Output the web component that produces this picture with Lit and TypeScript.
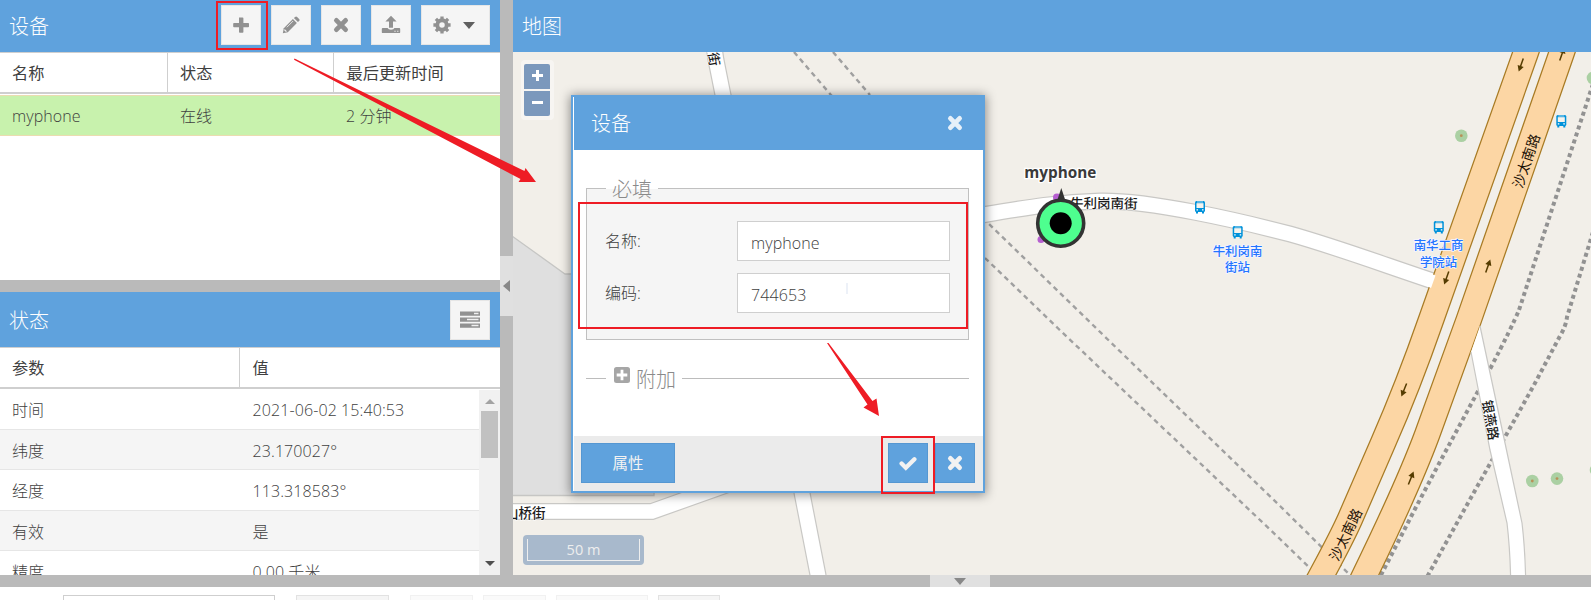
import { LitElement, html, css, svg } from "lit";
import { customElement } from "lit/decorators.js";

const glyph = (name: string) => {
  switch (name) {
    case "plus":
      return svg`<svg width="18" height="18" viewBox="0 0 18 18"><path d="M7 1.500h3.600a.8.8 0 0 1 .8.8V7h4.800a.8.8 0 0 1 .8.8v2.600a.8.8 0 0 1-.8.8h-4.800v4.700a.8.8 0 0 1-.8.8H7.800a.8.8 0 0 1-.8-.8v-4.700H2a.8.8 0 0 1-.8-.8V7.800A.8.8 0 0 1 2 7h5z" fill="currentColor"/></svg>`;
    case "pencil":
      return svg`<svg width="18" height="18" viewBox="0 0 18 18"><path d="M.8 17.200l1-5L10.900 3.100l4 4L5.800 16.200z" fill="currentColor"/><path d="M11.900 2.100l1.200-1.200a1.400 1.400 0 0 1 2 0l2 2a1.400 1.400 0 0 1 0 2l-1.200 1.200z" fill="currentColor"/><path d="M4.800 11.300l6.300-6.300" stroke="#f5f5f5" stroke-width=".8"/><path d="M2.400 13.600l2 2" stroke="#f5f5f5" stroke-width="1.300"/></svg>`;
    case "times":
      return svg`<svg width="16" height="16" viewBox="0 0 16 16"><path d="M3.400 3.400l9.200 9.200M12.600 3.400l-9.200 9.200" stroke="currentColor" stroke-width="4.800" stroke-linecap="round"/></svg>`;
    case "upload":
      return svg`<svg width="20" height="19" viewBox="0 0 20 19"><path d="M10 .7l5.600 5.900H12v6.200H8V6.600H4.400z" fill="currentColor"/><path d="M1.700 13.100h4.900a3.500 2.300 0 0 0 6.800 0h4.900a.9.9 0 0 1 .9.9v3.200a.9.9 0 0 1-.9.9H1.700a.9.9 0 0 1-.9-.9V14a.9.9 0 0 1 .9-.9z" fill="currentColor"/><path d="M13.400 16.300h1.200M16.200 16.300h1.200" stroke="#f5f5f5" stroke-width="1.100"/></svg>`;
    case "gear":
      return svg`<svg width="18" height="18" viewBox="0 0 18 18"><circle cx="9" cy="9" r="4.700" fill="none" stroke="currentColor" stroke-width="3.900"/><path d="M9 .4v3M9 14.600v3M.4 9h3M14.600 9h3M2.900 2.900l2 2M13.100 13.100l2 2M15.100 2.900l-2 2M4.900 13.100l-2 2" stroke="currentColor" stroke-width="3.300"/></svg>`;
    case "server":
      return svg`<svg width="20" height="17" viewBox="0 0 20 17"><path d="M0 .5h20v4.200H0zM0 6.500h20v4.200H0zM0 12.500h20v4.200H0z" fill="currentColor"/><path d="M14 2.600h4.500M7 8.600h11.500M11.500 14.600h7" stroke="#f0f0f0" stroke-width="1.500"/></svg>`;
    case "check":
      return svg`<svg width="18" height="15" viewBox="0 0 18 15"><path d="M2.600 7.600l4.200 4.200L15.400 3.200" fill="none" stroke="currentColor" stroke-width="4.300" stroke-linecap="round"/></svg>`;
    default:
      return svg`<svg width="16" height="16" viewBox="0 0 16 16"><path d="M2.500 0h11A2.500 2.500 0 0 1 16 2.500v11a2.500 2.500 0 0 1-2.500 2.500h-11A2.500 2.500 0 0 1 0 13.500v-11A2.500 2.500 0 0 1 2.500 0z" fill="currentColor"/><path d="M8 2.700v10.600M2.700 8h10.600" stroke="#fff" stroke-width="2.800"/></svg>`;
  }
};

@customElement("street-map")
class StreetMap extends LitElement {
  static styles = css`
    :host { display: block; overflow: hidden; background: #f2efe9; }
    svg { display: block; }
    text { font-family: "Noto Sans CJK SC", sans-serif; }
    .road { font-size: 13.500px; fill: #1c1c1c; font-weight: 500; stroke: #fff; stroke-width: 1.200px; paint-order: stroke; }
    .major { font-size: 14px; fill: #1c1206; font-weight: 400; }
    .stop { font-size: 12.400px; fill: #2474ff; font-weight: 500; stroke: #f4f6ff; stroke-width: 1.400px; paint-order: stroke; text-anchor: middle; }
    .pin { font: 700 15.300px "Open Sans", sans-serif; fill: #3a3a3a; stroke: #fff; stroke-width: 2.500px; paint-order: stroke; text-anchor: middle; }
    .edge { fill: none; stroke: #c9c8c5; stroke-width: 17; }
    .lane { fill: none; stroke: #fff; stroke-width: 14.600; }
    .kerb { fill: none; stroke: #a87b24; stroke-width: 26.500; }
    .deck { fill: none; stroke: #fcd6a4; stroke-width: 24; }
    .dash { fill: none; stroke: #a0a0a0; stroke-width: 2.400; stroke-dasharray: 5 4; }
    .dots { fill: none; stroke: #929292; stroke-width: 4; stroke-dasharray: 4 3.300; }
  `;

  private bus(x: number, y: number) {
    return svg`<g transform="translate(${x} ${y})">
      <rect x="-5" y="-6" width="10" height="11" rx="1.500" fill="#0092da"/>
      <rect x="-3.500" y="-3.800" width="7" height="4.800" fill="#f5f3ee"/>
      <path d="M-3 -5h6" stroke="#d6ecf6" stroke-width=".8"/>
      <path d="M-3.500 2.800h1.500M2 2.800h1.500" stroke="#fff" stroke-width="1.300"/>
      <path d="M-4 5h2v1.500h-2zM2 5h2v1.500h-2z" fill="#0092da"/></g>`;
  }
  private tree(x: number, y: number) {
    return svg`<circle cx=${x} cy=${y} r="6.300" fill="#abd0a3"/><circle cx=${x} cy=${y} r="1.400" fill="#b99058"/>`;
  }
  private oneway(x: number, y: number, turn: number) {
    return svg`<g transform="translate(${x} ${y}) rotate(${turn})"><path d="M-7 0H3" stroke="#553c00" stroke-width="1.500"/><path d="M1 -3.200L7 0L1 3.200z" fill="#553c00"/></g>`;
  }

  render() {
    const west = "M1530 40L1526 52L1431 320Q1408 386 1383 443L1350 519Q1342 537 1321.500 575L1314 589";
    const east = "M1566 40L1562 52L1468.700 320L1427 435Q1408 486 1364.700 575L1358 589";
    const lane = "M970 217L985 214.500C1030 207 1060 202 1100 201C1150 200 1240 221 1290 234C1340 248 1390 267 1445 285";
    const bridge = "M500 511.500H652L760 473";
    const north = "M713 40L716 60L730 130";
    const south = "M799 470L802 493L818 575L820 590";
    const plain = [lane, bridge, north, south];
    return html`<svg width="1078" height="523" viewBox="513 52 1078 523">
      <path d="M505 231L565 274H660L654 495.500H505z" fill="#dfdfdf" stroke="#c6c6c4" stroke-width="1.300"/>
      ${["M794 52L831 95Q900 160 986.700 221.700L1098 330L1280 506L1352 577", "M833 52L870 95", "M985 258L1058.700 329L1280 539L1318 576"].map((d) => svg`<path class="dash" d=${d}/>`)}
      <path class="dots" d="M1593 84L1519 310Q1512 327 1490 369L1440 461.700L1415 509L1380 577"/>
      <path class="dots" d="M1593 232L1567 317Q1566 326 1560 336L1534 385L1505 437L1468 503L1427 577"/>
      ${plain.map((d) => svg`<path class="edge" d=${d}/>`)}
      ${plain.map((d) => svg`<path class="lane" d=${d}/>`)}
      <path class="kerb" d=${west}/><path class="kerb" d=${east}/>
      <path class="deck" d=${west}/><path class="deck" d=${east}/>
      <path d="M1435.500 275.500L1431 288L1422 284L1427 272z" fill="#fff"/>
      <path d="M1471 352L1480 326L1506.500 450L1522 523Q1525 548 1525.700 580H1510.700Q1510 548 1507 523L1490 450z" fill="#fff"/>
      <path d="M1480 326L1506.500 450L1522 523Q1525 548 1525.700 580M1471 352L1490 450L1507 523Q1510 548 1510.700 580" fill="none" stroke="#c9c8c5" stroke-width="1.200"/>
      ${this.oneway(1521, 65, 109)}${this.oneway(1446.500, 278, 109)}${this.oneway(1404, 390, 112)}
      ${this.oneway(1562, 54, -71)}${this.oneway(1488, 266, -71)}${this.oneway(1411, 478, -68)}
      ${this.tree(1461.300, 135.700)}${this.tree(1593, 78)}${this.tree(1532.300, 481)}${this.tree(1557, 478.600)}${this.tree(1596, 470)}
      ${this.bus(1200, 207)}${this.bus(1237.700, 232)}${this.bus(1438.800, 227)}${this.bus(1561.300, 121)}
      <text class="stop" x="1237.500" y="255.500">牛利岗南</text><text class="stop" x="1237.500" y="272">街站</text>
      <text class="stop" x="1438.500" y="250">南华工商</text><text class="stop" x="1438.500" y="266.500">学院站</text>
      <text class="road" transform="translate(1070 208) rotate(.5)">牛利岗南街</text>
      <text class="road" x="505" y="517.500">山桥街</text>
      <text class="road" transform="translate(706 40) rotate(81)">南街</text>
      <text class="road" transform="translate(1482 401) rotate(80)">银燕路</text>
      <text class="major" transform="translate(1522 189) rotate(-71)">沙太南路</text>
      <text class="major" transform="translate(1338 562) rotate(-64)">沙太南路</text>
      <circle cx="1057" cy="197.500" r="4" fill="#b65fd0"/><circle cx="1041" cy="239.500" r="3.500" fill="#b65fd0"/>
      <path d="M1061.300 188L1066.500 204H1056z" fill="#333"/>
      <circle cx="1060.700" cy="223.300" r="23" fill="#4eff8f" stroke="#333" stroke-width="3.600"/>
      <circle cx="1060.700" cy="223.300" r="11" fill="#000"/>
      <text class="pin" x="1060.300" y="178">myphone</text>
    </svg>`;
  }
}

@customElement("device-dialog")
class DeviceDialog extends LitElement {
  static styles = css`
    :host { display: flex; flex-direction: column; box-sizing: border-box; width: 414px; height: 398px; border: 2px solid #5fa2dd; background: #fff; box-shadow: 0 1px 10px 1px rgba(0,0,0,.42); color: #404040; font: 300 16px "Open Sans", "Noto Sans CJK SC", sans-serif; }
    header { display: flex; align-items: center; justify-content: space-between; height: 53px; margin-left: 1px; padding: 0 20px 2px 17px; background: #5fa2dd; color: #fefefe; font-size: 20px; box-sizing: border-box; }
    header svg { opacity: .85; }
    main { flex: 1; padding: 38px 14px 0 13px; }
    .box { box-sizing: border-box; height: 152px; width: 383px; border: 1px solid #c0c0c0; background: #f5f5f5; padding: 0 18px; }
    .legend { display: flex; width: 52px; height: 28px; margin: -14px 0 0 1px; padding-bottom: 2px; box-sizing: border-box; justify-content: center; align-items: center; color: #8a8a8a; font-size: 20px; background: linear-gradient(#fff 50%, #f5f5f5 50%); }
    .field { display: flex; justify-content: space-between; height: 40px; margin-top: 12px; line-height: 40px; }
    .field.first { margin-top: 18px; }
    .value { box-sizing: border-box; width: 213px; border: 1px solid #cfcfcf; background: #fff; padding: 0 13px; line-height: 42px; letter-spacing: .1px; }
    .field:last-child .value { line-height: 43px; }
    .extra { display: flex; align-items: center; gap: 6px; margin-top: 23px; height: 30px; width: 383px; color: #8a8a8a; font-size: 20px; }
    .extra svg { color: #a6a6a6; margin: -7px 0 0 2px; }
    .rule { height: 1px; background: #bcbcbc; width: 20px; }
    .rule.long { flex: 1; }
    footer { display: flex; align-items: center; box-sizing: border-box; height: 55px; margin-left: 1px; background: #ebebeb; padding: 0 8px 1px 7px; gap: 7px; }
    .button { display: flex; align-items: center; justify-content: center; box-sizing: border-box; width: 40px; height: 40px; color: #f2f2f2; background: #5fa2dd; border: 1px solid #5597d2; font-size: 15.500px; font-weight: 400; }
    .button.wide { width: 94px; margin-right: auto; padding-bottom: 2px; }
  `;
  render() {
    return html`<header><span>设备</span>${glyph("times")}</header>
      <main>
        <div class="box"><div class="legend">必填</div>
          <div class="field first"><span>名称:</span><div class="value">myphone</div></div>
          <div class="field"><span>编码:</span><div class="value">744653</div></div>
        </div>
        <div class="extra"><i class="rule"></i>${glyph("plusbox")}<span>附加</span><i class="rule long"></i></div>
      </main>
      <footer><div class="button wide">属性</div><div class="button">${glyph("check")}</div><div class="button">${glyph("times")}</div></footer>`;
  }
}

@customElement("app-root")
class AppRoot extends LitElement {
  static styles = css`
    :host { display: grid; position: relative; grid-template: 575px 12px 13px / 500px 13px 1fr; width: 1591px; height: 600px; overflow: hidden; background: #fff; color: #404040; font: 300 16px "Open Sans", "Noto Sans CJK SC", sans-serif; }
    .left { display: grid; grid-template-rows: 280px 12px 283px; overflow: hidden; }
    .panel { display: flex; flex-direction: column; overflow: hidden; }
    .bar { display: flex; flex: none; align-items: center; gap: 10px; box-sizing: border-box; height: 52px; padding: 0 10px 2px 9px; background: #5fa2dd; color: #fefefe; font-size: 20px; }
    .bar.tall { height: 55px; padding-bottom: 0; }
    .title { flex: 1; }
    .tool { display: flex; align-items: center; justify-content: center; box-sizing: border-box; width: 40px; height: 40px; background: #f5f5f5; border: 1px solid #e6e6e6; color: #919191; }
    .tool svg { margin-top: -1px; }
    .tool.menu { width: 69px; gap: 12px; padding-right: 4px; }
    .caret { border: 6px solid transparent; border-top: 7px solid #606060; border-bottom: 0; }
    .heads { display: flex; flex: none; box-sizing: border-box; height: 42px; border-top: 1px solid #cfcfcf; border-bottom: 2px solid #cfcfcf; line-height: 41px; font-size: 16.200px; font-weight: 400; }
    .heads span { box-sizing: border-box; padding-left: 12px; border-right: 1px solid #cfcfcf; }
    .heads span:last-child { border: 0; flex: 1; padding-left: 12.500px; }
    .third { width: 168px; } .second { width: 166px; } .half { width: 240px; }
    .device { display: flex; height: 41px; box-sizing: border-box; margin-top: 1px; border: solid #ebdcb0; border-width: 1px 0; background: #c8f2ad; line-height: 41px; letter-spacing: .1px; }
    .device span { box-sizing: border-box; padding-left: 12px; }
    .scroll { display: flex; flex: 1; min-height: 0; overflow: hidden; }
    .rows { width: 479px; }
    .row { display: flex; height: 40.600px; box-sizing: border-box; border-bottom: 1px solid #e6e6e6; line-height: 43px; }
    .row:nth-child(even) { background: #f5f5f5; }
    .row .half { padding-left: 12px; box-sizing: border-box; } .row .value { padding-left: 12.500px; letter-spacing: .1px; }
    .track { display: flex; flex-direction: column; align-items: center; justify-content: space-between; box-sizing: border-box; width: 21px; margin-top: 1px; padding: 9px 0 9px; background: #f1f1f1; }
    .up { border: 5px solid transparent; border-bottom-color: #a3a3a3; border-top: 0; }
    .thumb { width: 17px; height: 47px; background: #c1c1c1; margin: 7px 0 auto; }
    .down { border: 5px solid transparent; border-top-color: #505050; border-bottom: 0; }
    .split { background: #bababa; }
    .vertical { display: flex; flex-direction: column; padding-top: 256px; box-sizing: border-box; }
    .grip { display: flex; align-items: center; justify-content: center; height: 60px; background: #e0e0e0; }
    .grip i { border: 6px solid transparent; border-right: 7px solid #888; border-left: 0; }
    .horizontal { grid-column: 1 / -1; display: flex; padding-left: 930px; }
    .horizontal .grip { width: 60px; height: 12px; }
    .horizontal .grip i { border: 6px solid transparent; border-top: 7px solid #888; border-bottom: 0; }
    .footer { grid-column: 1 / -1; display: flex; align-items: flex-start; padding: 8px 0 0 63px; overflow: hidden; }
    .footer i { box-sizing: border-box; height: 40px; border: 1px solid #e2e2e2; background: #f5f5f5; }
    .footer .input { width: 212px; background: #fff; border-color: #cfcfcf; margin-right: 21px; }
    .footer .go { width: 93px; margin-right: 21px; }
    .footer .pale { width: 63px; margin-right: 10px; border-color: #f1f1f1; background: #fafafa; }
    .footer .pale.long { width: 92px; } .footer .last { width: 62px; }
    street-map { flex: 1; }
    .zoom { position: absolute; left: 521px; top: 60px; display: grid; gap: 2px; padding: 4px 4px 4px 3px; border-radius: 4px; background: rgba(255,255,255,.4); }
    .zoom div { display: flex; align-items: center; justify-content: center; width: 26px; height: 25px; background: #7b98bc; color: #fff; }
    .zoom div:first-child { border-radius: 2px 2px 0 0; } .zoom div:last-child { border-radius: 0 0 2px 2px; }
    .zoom svg { margin-top: -2px; }
    .scale { position: absolute; left: 523px; top: 535px; box-sizing: border-box; width: 121px; height: 30px; padding: 4px; border-radius: 4px; background: #a8b9cc; }
    .scale div { box-sizing: border-box; width: 113px; height: 22px; border: 1px solid #eee; border-top: 0; color: #eee; text-align: center; font-size: 14.500px; line-height: 21px; font-weight: 400; }
    device-dialog { position: absolute; left: 571px; top: 95px; }
    .notes { position: absolute; left: 0; top: 0; pointer-events: none; }
  `;
  private readings = [["时间", "2021-06-02 15:40:53"], ["纬度", "23.170027°"], ["经度", "113.318583°"], ["有效", "是"], ["精度", "0.00 千米"]];
  render() {
    return html`
      <div class="left">
        <section class="panel">
          <div class="bar"><span class="title">设备</span>
            ${["plus", "pencil", "times", "upload"].map((n) => html`<div class="tool">${glyph(n)}</div>`)}
            <div class="tool menu">${glyph("gear")}<i class="caret"></i></div></div>
          <div class="heads"><span class="third">名称</span><span class="second">状态</span><span>最后更新时间</span></div>
          <div class="device"><span class="third">myphone</span><span class="second">在线</span><span>2 分钟</span></div>
        </section>
        <div class="split"></div>
        <section class="panel">
          <div class="bar tall"><span class="title">状态</span><div class="tool">${glyph("server")}</div></div>
          <div class="heads"><span class="half">参数</span><span>值</span></div>
          <div class="scroll"><div class="rows">${this.readings.map(([k, v]) => html`<div class="row"><span class="half">${k}</span><span class="value">${v}</span></div>`)}</div>
            <div class="track"><i class="up"></i><i class="thumb"></i><i class="down"></i></div></div>
        </section>
      </div>
      <div class="split vertical"><div class="grip"><i></i></div></div>
      <section class="panel"><div class="bar"><span class="title">地图</span></div><street-map></street-map></section>
      <div class="split horizontal"><div class="grip"><i></i></div></div>
      <div class="footer"><i class="input"></i><i class="go"></i><i class="pale"></i><i class="pale"></i><i class="pale long"></i><i class="last"></i></div>
      <div class="zoom"><div><svg width="11" height="11"><path d="M5.500 0v11M0 5.500h11" stroke="#fff" stroke-width="3"/></svg></div><div><svg width="11" height="11"><path d="M0 5.500h11" stroke="#fff" stroke-width="3"/></svg></div></div>
      <div class="scale"><div>50 m</div></div>
      <device-dialog></device-dialog>
      <svg class="notes" width="1591" height="600">
        <g fill="none" stroke="#ee1c25" stroke-width="2"><rect x="217" y="2" width="50" height="47"/><rect x="579" y="203" width="388" height="125"/><rect x="882" y="437" width="52" height="56"/></g>
        <path d="M294.500 58.500L524.500 171L525.500 168L536 182L518.500 182L520.500 179L294 59.800z" fill="#ee1c25"/>
        <path d="M827 343L828.500 343L872.500 401L876.500 398.500L879 416L863.500 407.500L867.500 404.500z" fill="#ee1c25"/>
        <path d="M847 283v11" stroke="#edf1f8" stroke-width="2"/>
      </svg>`;
  }
}
